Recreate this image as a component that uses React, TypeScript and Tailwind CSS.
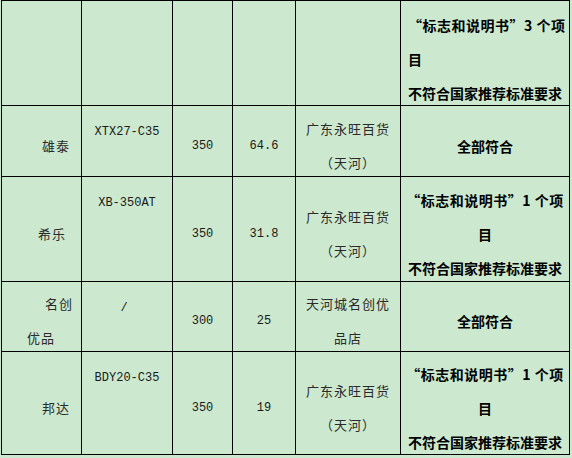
import React from "react";

type LineSpec = { text?: string; className?: string };

function Line({ text, className = "" }: LineSpec) {
  if (!text) return <div className="h-[34px]" />;
  return (
    <div className={`h-[34px] leading-[34px] whitespace-nowrap ${className}`}>
      {text}
    </div>
  );
}

function Cell({
  lines = [],
  className = "",
}: {
  lines?: LineSpec[];
  className?: string;
}) {
  return (
    <div
      className={`border-r border-b border-black flex flex-col justify-center pt-[9px] ${className}`}
    >
      {lines.map((l, i) => (
        <Line key={i} {...l} />
      ))}
    </div>
  );
}

const cjk = "font-['Noto_Sans_CJK_SC',sans-serif] text-[13px] tracking-[1px] text-[#2a2a2a]";
const mono = "font-['Liberation_Mono',monospace] text-[12px] text-[#1a1a1a]";
const bold = "font-['Noto_Sans_CJK_SC',sans-serif] text-[14px] font-bold text-black";

export default function App() {
  return (
    <div
      lang="zh-CN"
      className="min-h-screen w-full bg-[#cce8cf] overflow-hidden"
    >
      <div className="ml-px w-[569px] grid grid-cols-[80px_91px_60px_63px_105px_169px] grid-rows-[105px_71px_105px_70px_103px] border-l border-t border-black">
        {/* row 1 */}
        <Cell />
        <Cell />
        <Cell />
        <Cell />
        <Cell />
        <Cell
          className={`${bold} items-start pl-[7px] pt-[12px]`}
          lines={[
            { text: "“标志和说明书”3 个项", className: "tracking-[0.5px]" },
            { text: "目" },
            { text: "不符合国家推荐标准要求" },
          ]}
        />

        {/* row 2 */}
        <Cell className={`${cjk} items-start`} lines={[{ text: "雄泰", className: "pl-[40px]" }]} />
        <Cell className={`${mono} items-center`} lines={[{ text: "XTX27-C35" }, {}]} />
        <Cell className={`${mono} items-center`} lines={[{ text: "350" }]} />
        <Cell className={`${mono} items-center`} lines={[{ text: "64.6" }]} />
        <Cell
          className={`${cjk} items-center`}
          lines={[{ text: "广东永旺百货" }, { text: "（天河）" }]}
        />
        <Cell className={`${bold} items-center`} lines={[{ text: "全部符合" }]} />

        {/* row 3 */}
        <Cell className={`${cjk} items-start`} lines={[{ text: "希乐", className: "pl-[36px]" }]} />
        <Cell className={`${mono} items-center`} lines={[{ text: "XB-350AT" }, {}, {}]} />
        <Cell className={`${mono} items-center`} lines={[{ text: "350" }]} />
        <Cell className={`${mono} items-center`} lines={[{ text: "31.8" }]} />
        <Cell
          className={`${cjk} items-center`}
          lines={[{ text: "广东永旺百货" }, { text: "（天河）" }]}
        />
        <Cell
          className={`${bold} items-center`}
          lines={[
            { text: "“标志和说明书”1 个项", className: "tracking-[0.5px]" },
            { text: "目" },
            { text: "不符合国家推荐标准要求" },
          ]}
        />

        {/* row 4 */}
        <Cell
          className={`${cjk} items-start`}
          lines={[
            { text: "名创", className: "pl-[43px]" },
            { text: "优品", className: "pl-[25px]" },
          ]}
        />
        <Cell className={`${mono} items-center`} lines={[{ text: "/", className: "pr-[6px]" }, {}]} />
        <Cell className={`${mono} items-center`} lines={[{ text: "300" }]} />
        <Cell className={`${mono} items-center`} lines={[{ text: "25" }]} />
        <Cell
          className={`${cjk} items-center`}
          lines={[{ text: "天河城名创优" }, { text: "品店" }]}
        />
        <Cell className={`${bold} items-center`} lines={[{ text: "全部符合" }]} />

        {/* row 5 */}
        <Cell className={`${cjk} items-start`} lines={[{ text: "邦达", className: "pl-[40px]" }]} />
        <Cell className={`${mono} items-center`} lines={[{ text: "BDY20-C35" }, {}, {}]} />
        <Cell className={`${mono} items-center`} lines={[{ text: "350" }]} />
        <Cell className={`${mono} items-center`} lines={[{ text: "19" }]} />
        <Cell
          className={`${cjk} items-center`}
          lines={[{ text: "广东永旺百货" }, { text: "（天河）" }]}
        />
        <Cell
          className={`${bold} items-center`}
          lines={[
            { text: "“标志和说明书”1 个项", className: "tracking-[0.5px]" },
            { text: "目" },
            { text: "不符合国家推荐标准要求" },
          ]}
        />
      </div>
    </div>
  );
}
